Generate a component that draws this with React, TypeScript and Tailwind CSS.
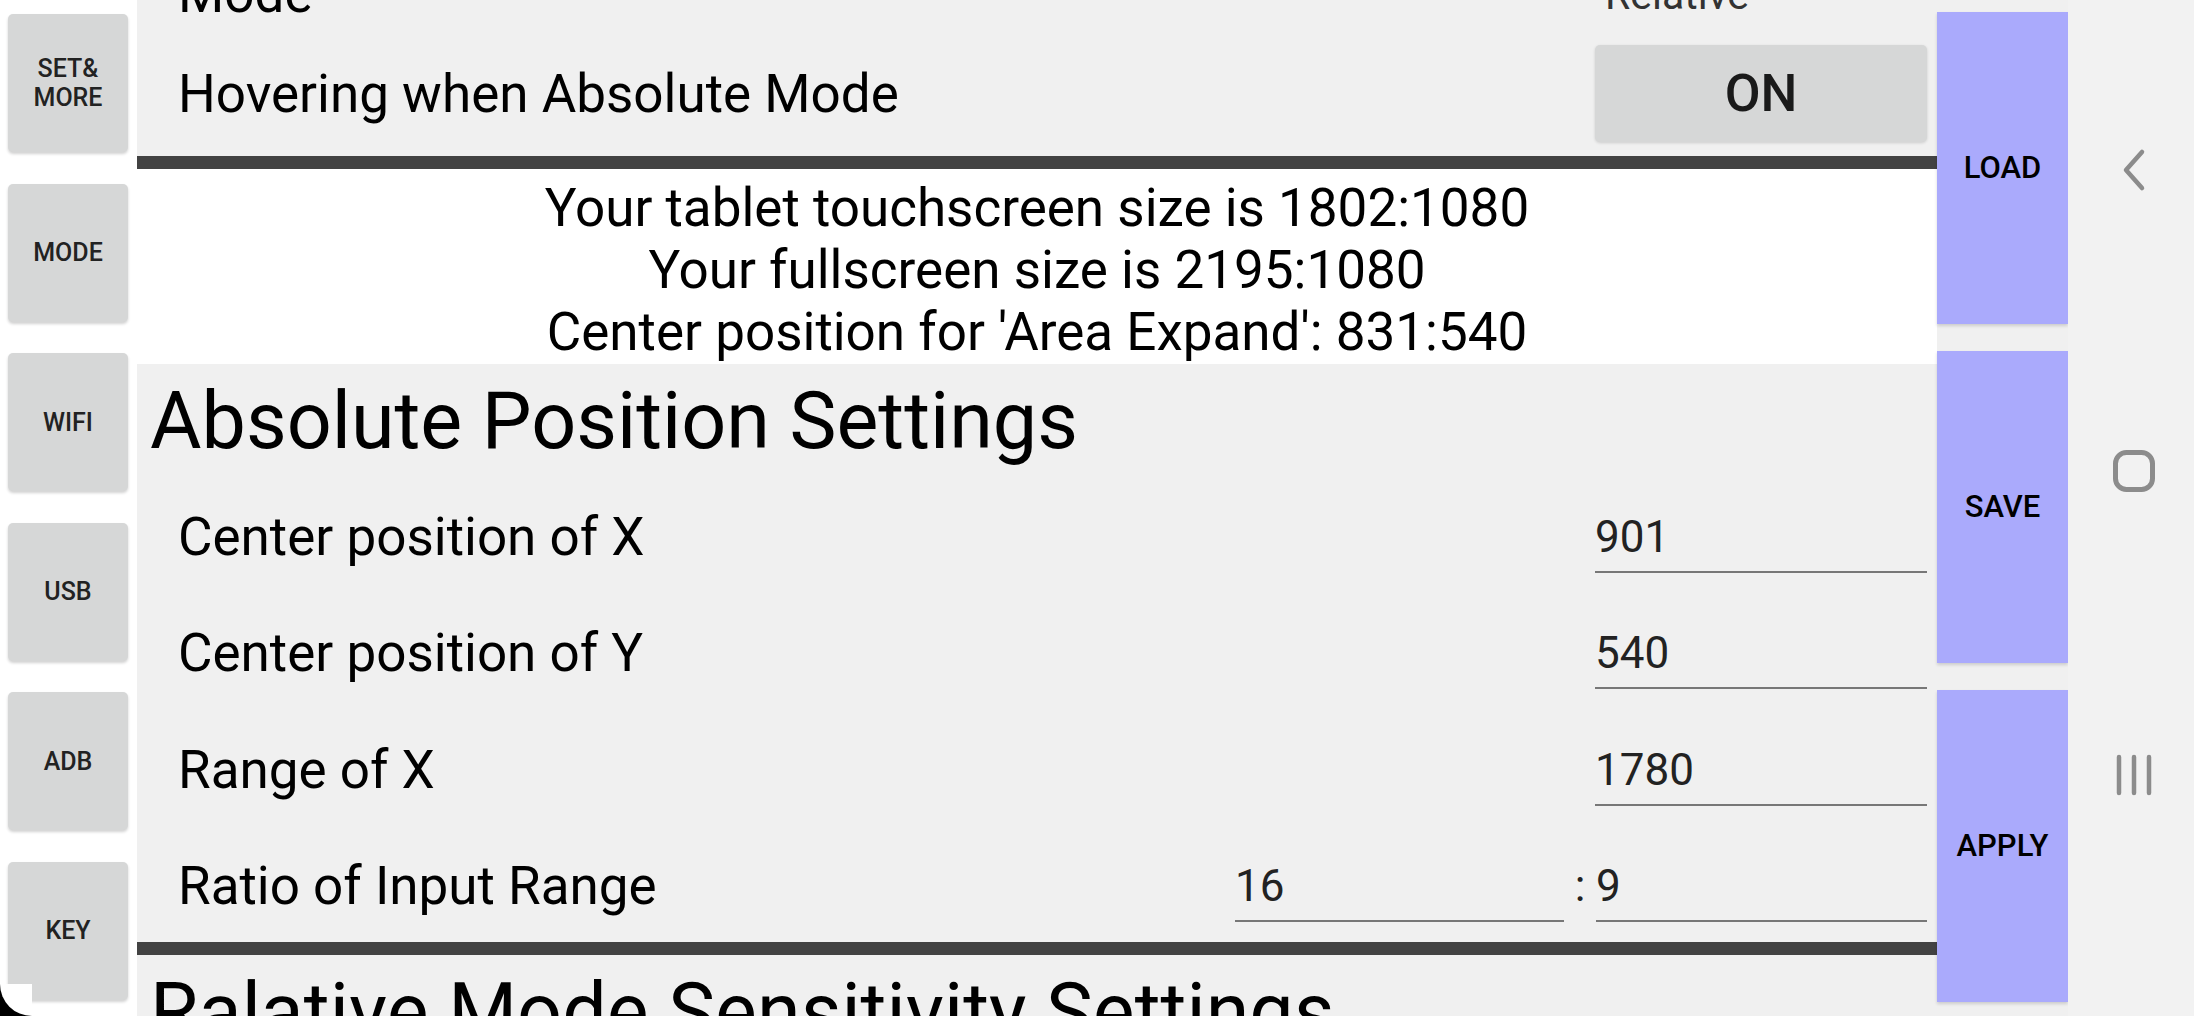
const sideButtons = [["SET&", "MORE"], ["MODE"], ["WIFI"], ["USB"], ["ADB"], ["KEY"]];
const actionButtons = ["LOAD", "SAVE", "APPLY"];

const absoluteRows = [
  { label: "Center position of X", value: "901" },
  { label: "Center position of Y", value: "540" },
  { label: "Range of X", value: "1780" },
];

const SideButton = ({ lines }: { lines: string[] }) => (
  <button className="flex h-[138px] w-[120px] flex-col items-center justify-center rounded-[5px] bg-[#d6d7d7] text-[25px] font-medium leading-[29px] text-[#222] shadow-[0_2px_3px_rgba(0,0,0,0.18)]">
    {lines.map((l) => (
      <span key={l}>{l}</span>
    ))}
  </button>
);

const ValueBox = ({ value, width }: { value: string; width: string }) => (
  <div
    className={`${width} border-b-2 border-[#777] pb-[8px] pt-[10px] text-[44px] leading-[52px] text-[#222]`}
  >
    {value}
  </div>
);

const Row = ({ label, children }: { label: string; children: React.ReactNode }) => (
  <div className="flex h-[116.5px] items-center justify-between pl-[41px] pr-[10px] pt-[5px]">
    <span className="text-[53px] leading-[62px] text-black">{label}</span>
    {children}
  </div>
);

const Heading = ({ title }: { title: string }) => (
  <h2 className="pl-[13px] pt-[9px] pb-[7px] text-[79px] leading-[96px] text-black">
    {title}
  </h2>
);

const DarkBar = () => <div className="h-[13px] w-full bg-[#424242]" />;

function NavBar() {
  return (
    <div className="flex w-[126px] flex-col items-center bg-[#f2f2f2] pl-[6px]">
      <svg className="mt-[148px]" width="26" height="44" viewBox="0 0 26 44">
        <path d="M21 4 L5 22 L21 40" fill="none" stroke="#8c8c8c" strokeWidth="4.5" strokeLinecap="round" strokeLinejoin="round" />
      </svg>
      <svg className="mt-[257px]" width="44" height="44" viewBox="0 0 44 44">
        <rect x="3.5" y="3.5" width="37" height="37" rx="11" fill="none" stroke="#8c8c8c" strokeWidth="5" />
      </svg>
      <svg className="mt-[261px]" width="40" height="42" viewBox="0 0 40 42">
        <path d="M5 3 V39 M20 3 V39 M35 3 V39" stroke="#8c8c8c" strokeWidth="4.5" strokeLinecap="round" />
      </svg>
    </div>
  );
}

function App() {
  return (
    <div className="relative flex h-[1016px] w-[2194px] overflow-hidden bg-white font-['Roboto',sans-serif]">
      {/* left menu */}
      <div className="flex w-[137px] flex-col gap-[31.5px] bg-white pl-[8px] pt-[14px]">
        {sideButtons.map((b) => (
          <SideButton key={b[0]} lines={b} />
        ))}
      </div>

      {/* settings scroll area */}
      <div className="w-[1800px] overflow-hidden bg-[#f0f0f0]">
        <div className="-mt-[37px]">
          <div className="flex h-[62px] items-start justify-between pl-[41px] pr-[10px]">
            <span className="text-[53px] leading-[62px] text-black">Mode</span>
            <span className="mt-[8px] w-[332px] pl-[10px] text-[41px] leading-[48px] text-[#333]">
              Relative
            </span>
          </div>
          <div className="flex h-[131px] items-center justify-between pl-[41px] pr-[10px] pt-[6px]">
            <span className="text-[53px] leading-[62px] text-black">Hovering when Absolute Mode</span>
            <button className="h-[97px] w-[332px] rounded-[5px] bg-[#d6d7d7] text-[52px] font-medium text-[#1a1a1a] shadow-[0_1px_3px_rgba(0,0,0,0.15)]">
              ON
            </button>
          </div>
        </div>
        <DarkBar />
        <div className="flex h-[195px] flex-col items-center bg-white pt-[8px] text-[53px] leading-[62px] text-black">
          <span>Your tablet touchscreen size is 1802:1080</span>
          <span>Your fullscreen size is 2195:1080</span>
          <span>Center position for 'Area Expand': 831:540</span>
        </div>
        <Heading title="Absolute Position Settings" />
        {absoluteRows.map((r) => (
          <Row key={r.label} label={r.label}>
            <ValueBox value={r.value} width="w-[332px]" />
          </Row>
        ))}
        <Row label="Ratio of Input Range">
          <div className="flex items-center">
            <ValueBox value="16" width="w-[329px]" />
            <span className="w-[32px] text-center text-[44px] leading-[52px] text-[#222]">:</span>
            <ValueBox value="9" width="w-[331px]" />
          </div>
        </Row>
        <DarkBar />
        <Heading title="Ralative Mode Sensitivity Settings" />
      </div>

      {/* action buttons */}
      <div className="flex w-[131px] flex-col gap-[27px] bg-[#f0f0f0] pt-[12px]">
        {actionButtons.map((a) => (
          <button
            key={a}
            className="h-[312px] w-full bg-[#aaaafc] text-[31px] font-medium text-black shadow-[0_2px_3px_rgba(0,0,0,0.15)]"
          >
            {a}
          </button>
        ))}
      </div>

      <NavBar />

      {/* screen corner */}
      <div className="absolute bottom-0 left-0 h-[32px] w-[32px] bg-black">
        <div className="h-full w-full rounded-bl-[32px] bg-white" />
      </div>
    </div>
  );
}

export default App;
